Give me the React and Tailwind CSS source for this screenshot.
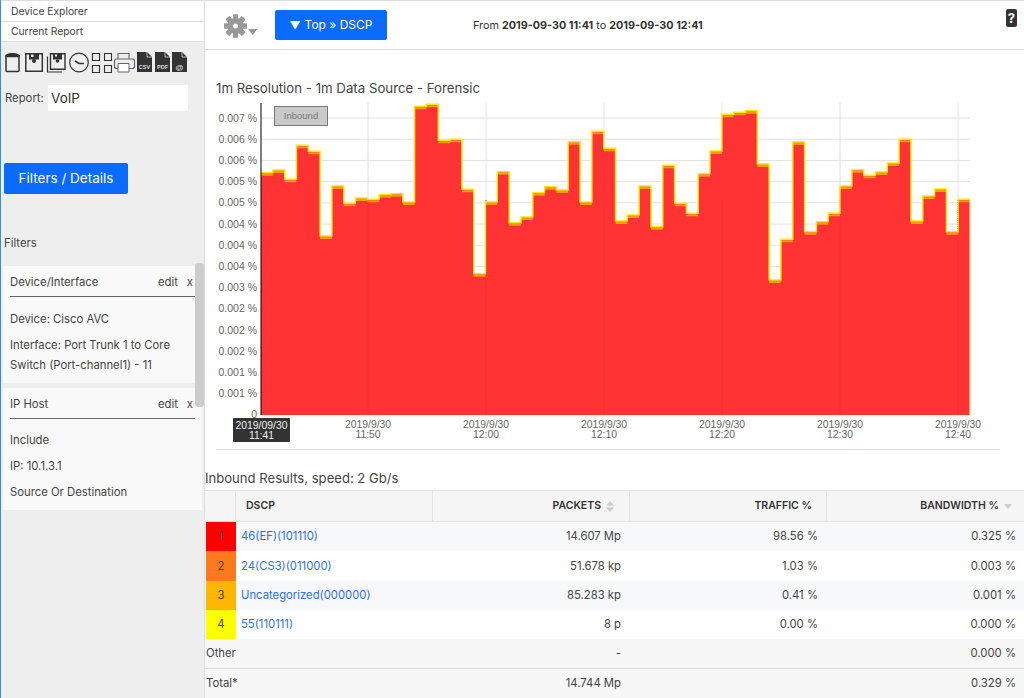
import React from "react";

const tops = [171.7,169,178.3,144.3,150.3,235,185,202.3,197,198.3,193.7,192.7,201,105.3,103.3,139.3,138.3,188.3,272.7,201,170.7,221.7,216,191.7,185.7,189,140.7,201,130.3,147.3,220,214,185,225.7,164.3,202.3,212.3,172.7,150,113.3,111.3,109.7,163,279,238.3,141,230.7,220.7,212.3,185,168.7,174.3,171,162,138.3,220,195,188,230.7,198.3];
const OX = 205, OY = 100;
const X = (i) => +(261 + i * 11.817 - OX).toFixed(1);
const Y = (v) => +(v - OY + 1).toFixed(1);
const stepLine = tops.map((t, i) => `${i === 0 ? "M" : "L"}${X(i)} ${Y(t)} L${X(i + 1)} ${Y(t)}`).join(" ");
const flats = tops.map((t, i) => `M${X(i)} ${Y(t) + 2} L${X(i + 1)} ${Y(t) + 2}`).join(" ");
const bottom = 415 - OY;
const area = `${stepLine} L${X(60)} ${bottom} L${X(0)} ${bottom} Z`;
const yLabels = ["0.007 %","0.006 %","0.006 %","0.005 %","0.005 %","0.004 %","0.004 %","0.004 %","0.003 %","0.002 %","0.002 %","0.002 %","0.001 %","0.001 %"];
const xTicks = [["11:50",368],["12:00",486],["12:10",604],["12:20",722],["12:30",840],["12:40",958]];

function Chart() {
  return (
    <svg width="819" height="345" viewBox="0 0 819 345" className="block" style={{ fontFamily: '"Liberation Sans", sans-serif' }}>
      {yLabels.map((l, i) => {
        const y = 118 - OY + i * 21.21;
        return (
          <g key={i}>
            <line x1="56" x2="765" y1={y} y2={y} stroke="#e2e2e2" strokeWidth="1" />
            <text x="52" y={y + 3.5} textAnchor="end" fontSize="10.5" fill="#666">{l}</text>
          </g>
        );
      })}
      {xTicks.map(([t, x]) => (
        <g key={t}>
          <line x1={x - OX} x2={x - OX} y1="3" y2={bottom} stroke="#e2e2e2" strokeWidth="1" />
          <text x={x - OX} y="328" textAnchor="middle" fontSize="10.4" fill="#666">2019/9/30</text>
          <text x={x - OX} y="338" textAnchor="middle" fontSize="10.4" fill="#666">{t}</text>
        </g>
      ))}
      <path d={area} fill="#ff3333" />
      {xTicks.map(([t, x]) => (
        <line key={t} x1={x - OX} x2={x - OX} y1="100" y2={bottom} stroke="#ee2d2d" strokeWidth="1" strokeDasharray="1 1" />
      ))}
      <path d={flats} fill="none" stroke="#f79a10" strokeWidth="2" />
      <path d={stepLine} fill="none" stroke="#ffe800" strokeWidth="1.4" />
      <line x1={X(60)} x2={X(60)} y1={Y(198.3)} y2={bottom} stroke="#ffe27a" strokeWidth="1.2" />
      <line x1="56" x2="56" y1="3" y2={bottom} stroke="#000" strokeWidth="1" />
      <rect x="69.5" y="6.5" width="53" height="19" fill="#c9c9c9" stroke="#777" />
      <text x="96" y="19" textAnchor="middle" fontSize="9.5" fill="#777">Inbound</text>
      <rect x="28" y="318" width="57" height="24" rx="1" fill="#333" />
      <text x="56.5" y="328.5" textAnchor="middle" fontSize="10.4" fill="#eee">2019/09/30</text>
      <text x="56.5" y="338.5" textAnchor="middle" fontSize="10.4" fill="#eee">11:41</text>
      <text x="52" y="318" textAnchor="end" fontSize="10.5" fill="#666">0</text>
    </svg>
  );
}

const D = "#333";
function ToolIcons() {
  return (
    <svg width="190" height="26" viewBox="0 0 190 26" className="block">
      {/* trash */}
      <path d="M5 6.500h13v14a1 1 0 0 1-1 1H6a1 1 0 0 1-1-1z" fill="none" stroke={D} strokeWidth="1.500" />
      <path d="M4 6.500c0-2.200 3-3.500 7.500-3.500s7.500 1.300 7.500 3.500z" fill={D} />
      {/* floppy */}
      <path d="M24.800 3.800h16.500v17.500H24.800z" fill="none" stroke={D} strokeWidth="1.500" />
      <path d="M28 3.500h10v6H28z" fill={D} />
      <path d="M30 4.500h2.500v2.500H30z" fill="#eee" />
      <circle cx="33" cy="11" r="2" fill={D} />
      {/* save as */}
      <path d="M46.500 6.500V22H61" fill="none" stroke={D} strokeWidth="1.200" />
      <path d="M49.500 3.800h14.500v15.500H49.500z" fill="none" stroke={D} strokeWidth="1.400" />
      <path d="M52 3.500h9v6h-9z" fill={D} />
      <path d="M54 4.500h2v2h-2z" fill="#eee" />
      <circle cx="56.500" cy="11" r="1.800" fill={D} />
      {/* clock */}
      <circle cx="78" cy="12.500" r="9.300" fill="none" stroke={D} strokeWidth="1.200" />
      <path d="M74 11l4 2.500h5" fill="none" stroke={D} strokeWidth="1.600" />
      {/* grid */}
      <path d="M91.500 3.500h7v7h-7zM103.500 3.500h7v7h-7zM91.500 15.500h7v7h-7zM103.500 15.500h7v7h-7z" fill="none" stroke={D} strokeWidth="1.100" />
      {/* printer */}
      <path d="M117 9V3.500h11V9" fill="none" stroke="#666" strokeWidth="1.100" />
      <path d="M117 18.500h-1.500a2 2 0 0 1-2-2v-5.500a2 2 0 0 1 2-2h16a2 2 0 0 1 2 2v5.500a2 2 0 0 1-2 2H128" fill="none" stroke="#666" strokeWidth="1.200" />
      <path d="M117 13.500h11v8.500h-11z" fill="#fff" stroke="#666" strokeWidth="1" />
      {/* docs */}
      {[136, 154, 171].map((x) => (
        <path key={x} d={`M${x} 2h10l5 5v15h-15z`} fill={D} />
      ))}
      <path d="M146 2v5h5M164 2v5h5M181 2v5h5" fill="none" stroke="#eee" strokeWidth=".7" />
      <text x="143.500" y="19" textAnchor="middle" fontSize="5.500" fontWeight="700" fill="#ddd" fontFamily="Liberation Sans">CSV</text>
      <text x="161.500" y="19" textAnchor="middle" fontSize="5.500" fontWeight="700" fill="#ddd" fontFamily="Liberation Sans">PDF</text>
      <text x="178.500" y="19.500" textAnchor="middle" fontSize="8" fontWeight="700" fill="#ddd" fontFamily="Liberation Sans">@</text>
    </svg>
  );
}

function Gear() {
  const teeth = Array.from({ length: 8 }, (_, i) => i * 45);
  return (
    <svg width="36" height="24" viewBox="0 0 36 24" className="block">
      <g fill="#999">
        {teeth.map((a) => (
          <rect key={a} x="9" y="0.500" width="5" height="23" rx="0.500" transform={`rotate(${a} 11.500 12)`} />
        ))}
        <circle cx="11.500" cy="12" r="8" />
      </g>
      <circle cx="11.500" cy="12" r="2.500" fill="#fff" />
      <path d="M24 15h9.500l-4.750 6z" fill="#999" />
    </svg>
  );
}

function FilterCard({ title, children }) {
  return (
    <div className="bg-[#f9f9f9] px-[7px]">
      <div className="h-[31px] flex items-end pb-[5px] justify-between border-b border-[#666]">
        <span>{title}</span>
        <span className="flex gap-[9px] pr-[2px]"><span>edit</span><span>x</span></span>
      </div>
      {children}
    </div>
  );
}

const rows = [
  ["1", "#ff0000", "46(EF)(101110)", "14.607 Mp", "98.56 %", "0.325 %", "bg-[#f7f8fa]", "h-[29px]"],
  ["2", "#ff7a1c", "24(CS3)(011000)", "51.678 kp", "1.03 %", "0.003 %", "bg-white", "h-[30px]"],
  ["3", "#ffb600", "Uncategorized(000000)", "85.283 kp", "0.41 %", "0.001 %", "bg-[#f7f8fa]", "h-[29px]"],
  ["4", "#ffff00", "55(110111)", "8 p", "0.00 %", "0.000 %", "bg-white", "h-[29px]"],
];
const grid = "grid grid-cols-[31px_197px_197px_197px_197px]";

export default function App() {
  return (
    <div className="w-[1024px] h-[698px] overflow-hidden flex bg-white text-[11.3px] text-[#444]" style={{ fontFamily: 'Inter, "Noto Sans", sans-serif' }}>
      <aside className="w-[205px] h-full shrink-0 bg-[#eeeeee] border-l border-l-[#2f8fe6] border-r border-r-[#dddddd] relative">
        <div className="border-t border-[#dddddd]" />
        <div className="h-[21px] bg-white border-b border-[#dddddd] pl-[10px] pt-[1px] flex items-center text-[10.3px]">Device Explorer</div>
        <div className="h-[20px] bg-white border-b border-[#dddddd] pl-[10px] flex items-center text-[10.3px]">Current Report</div>
        <div className="pt-[8px]"><ToolIcons /></div>
        <div className="flex items-center mt-[9px] pl-[4px] h-[26px]">
          <span className="w-[43px] pt-[1px] text-[11.3px]">Report:</span>
          <div className="w-[140px] h-[26px] bg-white pl-[3px] flex items-center text-[13.5px] text-[#333]">VoIP</div>
        </div>
        <button className="mt-[52px] ml-[3px] w-[124px] h-[31px] bg-[#0a6cff] rounded-[2px] text-white text-[13.5px] block">Filters / Details</button>
        <div className="mt-[41px] pl-[3px] h-[16px] flex items-center">Filters</div>
        <div className="mt-[15px] ml-[2px] w-[199px]">
          <FilterCard title="Device/Interface">
            <div className="pt-[15px] leading-[14px]">Device: Cisco AVC</div>
            <div className="pt-[9px] leading-[20px] pb-[8px]">Interface: Port Trunk 1 to Core<br />Switch (Port-channel1) - 11</div>
          </FilterCard>
          <div className="h-[5px]" />
          <FilterCard title="IP Host">
            <div className="pt-[14px] leading-[14px]">Include</div>
            <div className="pt-[12px] leading-[14px]">IP: 10.1.3.1</div>
            <div className="pt-[12px] pb-[11px] leading-[14px]">Source Or Destination</div>
          </FilterCard>
        </div>
        <div className="absolute left-[194px] top-[263px] w-[9px] h-[144px] bg-[#cccccc] rounded-[3px]" />
      </aside>

      <main className="flex-1 min-w-0">
        <header className="h-[50px] border-t border-t-[#dddddd] border-b border-b-[#dddddd] flex items-start relative">
          <div className="ml-[19px] mt-[13px]"><Gear /></div>
          <button className="ml-[15px] mt-[9px] w-[112px] h-[30px] bg-[#0a6cff] rounded-[2px] text-white text-[12px] flex items-center justify-center gap-[4px]">
            <span className="text-[11px]">▼</span><span>Top » DSCP</span>
          </button>
          <div className="ml-[86px] mt-[18px] text-[10.8px] leading-[14px] text-[#333]">
            From <b>2019-09-30 11:41</b> to <b>2019-09-30 12:41</b>
          </div>
          <div className="absolute right-[7px] top-[8px] w-[11px] h-[18px] bg-[#333] rounded-[2px] text-white text-[13px] leading-[18px] font-bold text-center">?</div>
        </header>
        <h2 className="pl-[11px] mt-[29px] mb-[1px] h-[20px] flex items-center text-[13.25px] font-normal text-[#444]">1m Resolution - 1m Data Source - Forensic</h2>
        <Chart />
        <div className="ml-[11px] w-[784px] border-t border-[#dddddd] mt-[4px]" />
        <h3 className="mt-[19px] mb-[1px] h-[20px] flex items-center text-[13.1px] font-normal text-[#444]">Inbound Results, speed: 2 Gb/s</h3>
        <div>
          <div className={`${grid} h-[32px] bg-[#f5f5f5] border-t border-b border-[#e2e2e2] font-semibold text-[10.5px] text-[#333]`}>
            <div className="border-r border-[#e2e2e2]" />
            <div className="pl-[10px] flex items-center border-r border-[#e2e2e2]">DSCP</div>
            <div className="flex items-center justify-end pr-[15px] gap-[5px] border-r border-[#e2e2e2]">PACKETS
              <svg width="8" height="11" viewBox="0 0 8 11"><path d="M4 0l4 4.500H0zM4 11L0 6.500h8z" fill="#ccc" /></svg>
            </div>
            <div className="flex items-center justify-end pr-[14px] border-r border-[#e2e2e2]">TRAFFIC %</div>
            <div className="flex items-center justify-end pr-[12px] gap-[5px]">BANDWIDTH %
              <svg width="8" height="5" viewBox="0 0 8 5"><path d="M0 0h8L4 5z" fill="#ccc" /></svg>
            </div>
          </div>
          {rows.map((r) => (
            <div key={r[0]} className={`${grid} ${r[7]} ${r[6]} items-stretch`}>
              <div className="ml-[1px] flex items-center justify-center text-[#444]" style={{ backgroundColor: r[1] }}>{r[0]}</div>
              <div className="flex items-center pl-[5px] text-[#2f6fed]">{r[2]}</div>
              <div className="flex items-center justify-end pr-[9px]">{r[3]}</div>
              <div className="flex items-center justify-end pr-[9px]">{r[4]}</div>
              <div className="flex items-center justify-end pr-[8px]">{r[5]}</div>
            </div>
          ))}
          <div className={`${grid} h-[29px] bg-[#f7f7f7]`}>
            <div className="flex items-center pl-[1px]">Other</div>
            <div />
            <div className="flex items-center justify-end pr-[9px]">-</div>
            <div />
            <div className="flex items-center justify-end pr-[8px]">0.000 %</div>
          </div>
          <div className={`${grid} h-[30px] bg-[#f7f7f7] border-t border-[#dddddd]`}>
            <div className="flex items-center pl-[1px]">Total*</div>
            <div />
            <div className="flex items-center justify-end pr-[9px]">14.744 Mp</div>
            <div />
            <div className="flex items-center justify-end pr-[8px]">0.329 %</div>
          </div>
        </div>
      </main>
    </div>
  );
}
